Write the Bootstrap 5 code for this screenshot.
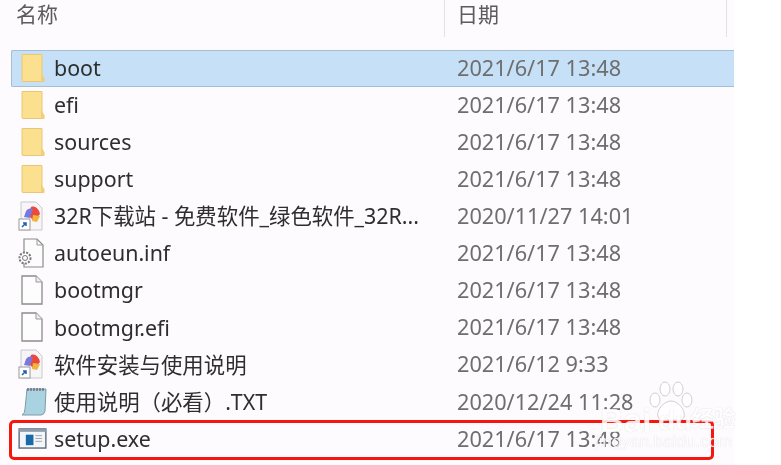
<!DOCTYPE html>
<html lang="zh"><head><meta charset="utf-8"><title>files</title>
<link rel="stylesheet" href="https://cdn.jsdelivr.net/npm/bootstrap@5.3.0/dist/css/bootstrap.min.css">
<style>
html,body{margin:0;height:465px;overflow:hidden;background:#fff}
.pane{width:734px;height:465px;background:#fdfbfd;position:relative;font-family:"Noto Sans","Noto Sans CJK SC",sans-serif}
.soft{filter:blur(.55px)}
.head{height:50px;color:#5c5c5c;font-size:21px;line-height:28px}
.hname{width:444px;padding-left:16px;height:37px}
.hdate{width:283px;height:37px;padding-left:12px;border-left:1px solid #e2e2e6;border-right:1px solid #e2e2e6}
.frow{height:37.1px;margin-left:11px;padding-bottom:2px;border:1px solid transparent;border-right:0}
.frow.sel{background:#c5e0f7;border-color:#a5bfd0;border-radius:2px 0 0 2px}
.ico{width:32px;margin-left:6px;flex:none;display:flex;justify-content:flex-start}
.ico-3{margin-left:3px}.ico-2{margin-left:2px}
.fname{width:395px;margin-left:4px;font-size:21.4px;color:#2e2e2e;white-space:nowrap;line-height:1}
.fdate{font-size:21.7px;color:#6e6e6e;white-space:nowrap;padding-left:8px;line-height:1}
.redbox{position:absolute;left:9px;top:420px;width:705px;height:40px;border:3px solid #f5170e;border-radius:5px;pointer-events:none}
.mark-wm{position:absolute;left:590px;top:378px;width:191px;height:87px;pointer-events:none}
.mark-wm span{position:absolute;white-space:nowrap;color:#fff;text-shadow:0 0 1px #c9c5c9;opacity:.85;font-family:"Liberation Sans",sans-serif}
.paw{position:absolute;left:58px;top:3px}
.wm-t{left:10px;top:18px;font-size:33px;font-weight:700}
.wm-d{left:68px;top:22px;font-size:28px;font-weight:700}
.wm-c{left:102px;top:22px;font-size:22px;font-family:"Noto Sans CJK SC",sans-serif!important;font-weight:700}
.wm-u{left:5px;top:51px;font-size:17px}
</style></head><body>
<svg width="0" height="0" class="position-absolute"><defs>
<symbol id="fld" viewBox="0 0 24 30"><path d="M1 1.500h20v23l2 .5v3.500H2a1 1 0 0 1-1-1z" fill="#fbe08f" stroke="#e8c878"/><path d="M20 28.500v-9l3 5v4z" fill="#efcf7c"/></symbol>
<symbol id="doc" viewBox="0 0 24 30"><path d="M2 1h14l6 6v22H2z" fill="#fdfdfd" stroke="#8c8c8c" stroke-width="1.300"/><path d="M16 1v6h6" fill="#eee" stroke="#9a9a9a"/></symbol>
<symbol id="lnk" viewBox="0 0 26 30"><path d="M3 1h15l6 6v22H3z" fill="#f7f5f8" stroke="#c8c8cc"/><path d="M13 6c5-2 8 3 9 7l-6 7-6-6z" fill="#ea4a3a"/><path d="M8 10c2-3 5-3 7-2l-3 9-6-1z" fill="#7b78dd"/><path d="M15 14l7 1-3 6-5-1z" fill="#f2b43c"/><rect x="1" y="18" width="11" height="11" fill="#fff" stroke="#999"/><path d="M4 26l4-4m-3 0h3v3" fill="none" stroke="#1f5fb0" stroke-width="1.500"/></symbol>
<symbol id="inf" viewBox="0 0 26 30"><path d="M6 1h13l6 6v22H6z" fill="#fcfcfc" stroke="#8c8c8c" stroke-width="1.200"/><path d="M19 1v6h6" fill="none" stroke="#999"/><circle cx="7" cy="20" r="5.500" fill="#fff" stroke="#777" stroke-width="2" stroke-dasharray="2 1.300"/><circle cx="7" cy="20" r="2.500" fill="none" stroke="#777"/></symbol>
<symbol id="txt" viewBox="0 0 28 30"><path d="M7 3h19l-1 22q-1 4-4 4H2q3-2 3-6z" fill="#a9d3e0" stroke="#7e9aa5"/><path d="M8 2v3m3-3v3m3-3v3m3-3v3m3-3v3m3-3v3" stroke="#667" stroke-width="1.300"/></symbol>
<symbol id="exe" viewBox="0 0 30 22"><rect x="1" y="1" width="28" height="20" fill="#f4f5f8" stroke="#5f6f80" stroke-width="1.500"/><rect x="1" y="1" width="28" height="3" fill="#8c9cab"/><rect x="8" y="7" width="8" height="11" fill="#1a6aa8"/><path d="M18 8h7M18 11h7M18 14h7" stroke="#9aa6b0"/></symbol>
</defs></svg>
<div class="pane">
 <div class="soft">
  <div class="head d-flex">
    <div class="hname">名称</div>
    <div class="hdate">日期</div>
  </div>
  <div class="d-flex flex-column">
    <div class="frow sel d-flex align-items-center"><span class="ico"><svg class="ico-3" width="24" height="30"><use href="#fld"/></svg></span><span class="fname">boot</span><span class="fdate">2021/6/17 13:48</span></div>
    <div class="frow d-flex align-items-center"><span class="ico"><svg class="ico-3" width="24" height="30"><use href="#fld"/></svg></span><span class="fname">efi</span><span class="fdate">2021/6/17 13:48</span></div>
    <div class="frow d-flex align-items-center"><span class="ico"><svg class="ico-3" width="24" height="30"><use href="#fld"/></svg></span><span class="fname">sources</span><span class="fdate">2021/6/17 13:48</span></div>
    <div class="frow d-flex align-items-center"><span class="ico"><svg class="ico-3" width="24" height="30"><use href="#fld"/></svg></span><span class="fname">support</span><span class="fdate">2021/6/17 13:48</span></div>
    <div class="frow d-flex align-items-center"><span class="ico"><svg width="26" height="30"><use href="#lnk"/></svg></span><span class="fname">32R下载站 - 免费软件_绿色软件_32R...</span><span class="fdate">2020/11/27 14:01</span></div>
    <div class="frow d-flex align-items-center"><span class="ico"><svg width="26" height="30"><use href="#inf"/></svg></span><span class="fname">autoeun.inf</span><span class="fdate">2021/6/17 13:48</span></div>
    <div class="frow d-flex align-items-center"><span class="ico"><svg class="ico-2" width="24" height="30"><use href="#doc"/></svg></span><span class="fname">bootmgr</span><span class="fdate">2021/6/17 13:48</span></div>
    <div class="frow d-flex align-items-center"><span class="ico"><svg class="ico-2" width="24" height="30"><use href="#doc"/></svg></span><span class="fname">bootmgr.efi</span><span class="fdate">2021/6/17 13:48</span></div>
    <div class="frow d-flex align-items-center"><span class="ico"><svg width="26" height="30"><use href="#lnk"/></svg></span><span class="fname">软件安装与使用说明</span><span class="fdate">2021/6/12 9:33</span></div>
    <div class="frow d-flex align-items-center"><span class="ico"><svg class="ico-2" width="28" height="30"><use href="#txt"/></svg></span><span class="fname">使用说明（必看）.TXT</span><span class="fdate">2020/12/24 11:28</span></div>
    <div class="frow d-flex align-items-center"><span class="ico"><svg width="29" height="21"><use href="#exe"/></svg></span><span class="fname">setup.exe</span><span class="fdate">2021/6/17 13:48</span></div>
  </div>
 </div>
 <div class="redbox soft"></div>
</div>
<div class="mark-wm">
  <svg class="paw" width="46" height="44" viewBox="0 0 46 44"><g fill="#fff" stroke="#d2ced2" stroke-width="1"><ellipse cx="7" cy="19" rx="5" ry="7"/><ellipse cx="17" cy="8" rx="5" ry="7"/><ellipse cx="30" cy="8" rx="5" ry="7"/><ellipse cx="39" cy="19" rx="5" ry="7"/><path d="M23 20c7 0 15 9 13 16-2 5-8 3-13 3s-11 2-13-3c-2-7 6-16 13-16z"/></g></svg>
  <span class="wm-t">Bai</span><span class="wm-d">du</span><span class="wm-c">经验</span><span class="wm-u">jingyan.baidu.com</span>
</div>
</body></html>
